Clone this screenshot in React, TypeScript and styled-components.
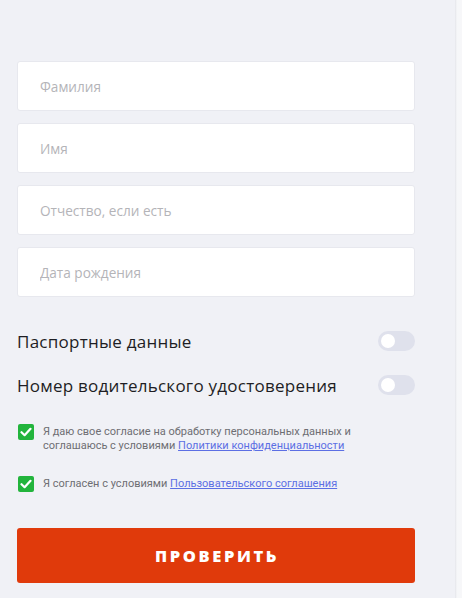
import React from "react";
import styled, { createGlobalStyle } from "styled-components";

const Global = createGlobalStyle`
  html, body { margin: 0; padding: 0; background: #f0f1f6; }
  body { font-family: "Open Sans", "Noto Sans", sans-serif; }
  * { box-sizing: border-box; }
`;

const Page = styled.div`
  display: flex;
  width: 462px;
  height: 598px;
  overflow: hidden;
`;

const Main = styled.div`
  width: 455px;
  background: #f0f1f6;
  padding: 61px 0 0 17px;
`;

const Edge = styled.div`
  flex: 1;
  background: linear-gradient(to right, #e4e5ea 0px, #f6f7f9 2px, #f7f7f9 100%);
`;

const Form = styled.form`
  width: 398px;
  display: flex;
  flex-direction: column;
`;

const Fields = styled.div`
  display: flex;
  flex-direction: column;
  gap: 12px;
`;

const Input = styled.input`
  height: 50px;
  width: 100%;
  border: 1px solid #e7e8ee;
  border-radius: 3px;
  background: #fff;
  padding: 0 22px;
  font-family: "Open Sans", sans-serif;
  font-size: 13.6px;
  color: #333;
  outline: none;
  &::placeholder { color: #b4b4b8; }
`;

const Toggles = styled.div`
  margin-top: 34px;
  display: flex;
  flex-direction: column;
  gap: 24px;
`;

const ToggleRow = styled.label`
  display: flex;
  align-items: center;
  justify-content: space-between;
  height: 20px;
  font-family: "Open Sans", sans-serif;
  font-size: 17px;
  font-weight: 500;
  color: #1e1e24;
  letter-spacing: 0.25px;
`;

const Track = styled.span<{ $on?: boolean }>`
  position: relative;
  width: 37px;
  height: 20px;
  border-radius: 10px;
  background: ${(p) => (p.$on ? "#22b43c" : "#dfe1ec")};
  flex: none;
`;

const Knob = styled.span<{ $on?: boolean }>`
  position: absolute;
  top: 3px;
  left: ${(p) => (p.$on ? "20px" : "3px")};
  width: 14px;
  height: 14px;
  border-radius: 50%;
  background: #fff;
`;

const Agreements = styled.div`
  margin-top: 30px;
  display: flex;
  flex-direction: column;
  gap: 24px;
`;

const CheckRow = styled.label`
  display: flex;
  align-items: flex-start;
  gap: 9px;
  font-family: "Roboto", "Open Sans", sans-serif;
  font-size: 11px;
  line-height: 14px;
  color: #6e6e73;
`;

const Box = styled.span`
  flex: none;
  width: 16px;
  height: 16px;
  border-radius: 2px;
  background: #22b43c;
  display: flex;
  align-items: center;
  justify-content: center;
  margin-left: 1px;
  margin-top: -1px;
`;

const Text = styled.span`
  max-width: 318px;
`;

const Link = styled.a`
  color: #5c6fe4;
  text-decoration: underline;
`;

const Submit = styled.button`
  margin-top: 36px;
  height: 55px;
  width: 100%;
  border: none;
  border-radius: 3px;
  background: #e03a0b;
  color: #fff;
  font-family: "Open Sans", sans-serif;
  font-weight: 800;
  font-size: 16.5px;
  letter-spacing: 2.6px;
  text-transform: uppercase;
  padding-left: 8px;
`;

const Check = () => (
  <svg width="12" height="10" viewBox="0 0 12 10">
    <path d="M1.5 5.2 L4.6 8.2 L10.5 1.8" fill="none" stroke="#fff" strokeWidth="2.2" strokeLinecap="round" strokeLinejoin="round" />
  </svg>
);

export default function App() {
  return (
    <>
      <Global />
      <Page>
        <Main>
          <Form onSubmit={(e) => e.preventDefault()}>
            <Fields>
              <Input placeholder="Фамилия" />
              <Input placeholder="Имя" />
              <Input placeholder="Отчество, если есть" />
              <Input placeholder="Дата рождения" />
            </Fields>
            <Toggles>
              <ToggleRow>
                Паспортные данные
                <Track><Knob /></Track>
              </ToggleRow>
              <ToggleRow>
                Номер водительского удостоверения
                <Track><Knob /></Track>
              </ToggleRow>
            </Toggles>
            <Agreements>
              <CheckRow>
                <Box><Check /></Box>
                <Text>
                  Я даю свое согласие на обработку персональных данных и соглашаюсь с условиями{" "}
                  <Link href="#">Политики конфиденциальности</Link>
                </Text>
              </CheckRow>
              <CheckRow>
                <Box><Check /></Box>
                <Text>
                  Я согласен с условиями <Link href="#">Пользовательского соглашения</Link>
                </Text>
              </CheckRow>
            </Agreements>
            <Submit type="submit">Проверить</Submit>
          </Form>
        </Main>
        <Edge />
      </Page>
    </>
  );
}
